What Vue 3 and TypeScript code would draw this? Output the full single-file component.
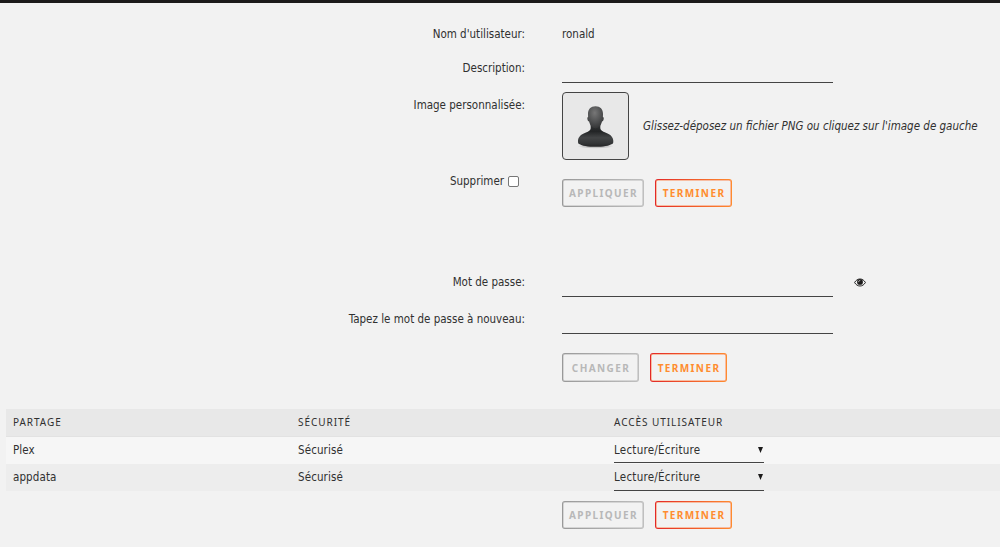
<script setup lang="ts">
import { ref } from 'vue';

interface Share {
  name: string;
  security: string;
  access: string;
}

const username = ref('ronald');
const description = ref('');
const remove = ref(false);
const password = ref('');
const passwordRepeat = ref('');
const showPassword = ref(false);

const shares = ref<Share[]>([
  { name: 'Plex', security: 'Sécurisé', access: 'Lecture/Écriture' },
  { name: 'appdata', security: 'Sécurisé', access: 'Lecture/Écriture' }
]);
</script>

<template>
  <div class="page">
    <form class="form form--user" @submit.prevent>
      <div class="row">
        <label class="row__label">Nom d'utilisateur:</label>
        <span class="row__text">{{ username }}</span>
      </div>
      <div class="row row--description">
        <label class="row__label">Description:</label>
        <input v-model="description" class="input" type="text">
      </div>
      <div class="row row--image">
        <label class="row__label">Image personnalisée:</label>
        <div class="picture">
          <div class="picture__box">
            <svg class="avatar" viewBox="0 0 40 46" width="40" height="46">
              <defs>
                <radialGradient id="head" cx="0.45" cy="0.3" r="0.7">
                  <stop offset="0" stop-color="#777" />
                  <stop offset="0.6" stop-color="#4f5051" />
                  <stop offset="1" stop-color="#343536" />
                </radialGradient>
                <linearGradient id="body" x1="0" y1="0" x2="0" y2="1">
                  <stop offset="0" stop-color="#3a3c3d" />
                  <stop offset="0.35" stop-color="#222425" />
                  <stop offset="0.62" stop-color="#434546" />
                  <stop offset="0.85" stop-color="#353738" />
                  <stop offset="1" stop-color="#242526" />
                </linearGradient>
                <radialGradient id="shade">
                  <stop offset="0.6" stop-color="#c4c4c4" />
                  <stop offset="1" stop-color="#c4c4c4" stop-opacity="0" />
                </radialGradient>
              </defs>
              <ellipse cx="19.500" cy="41.300" rx="18" ry="2.4" fill="url(#shade)" />
              <path fill="url(#body)" d="M14.600 18h9.800l-.1 5.200c.3 2.200 2.400 3.200 5 4.200 4.800 1.700 7.900 4.300 8 8.400 0 1 0 1.900-.3 2.600C33.300 40.900 27 41.700 19.500 41.700S5.700 40.900 2.300 38.400C2 37.700 2 36.800 2 35.800c.1-4.100 3.200-6.700 8-8.400 2.600-1 4.500-2 4.700-4.200z" />
              <path fill="url(#head)" d="M19.500 1.300c4.800 0 7.500 3 7.500 7.700l-.1 2.900c1 .1 1 1.500.7 2.700-.3 1.300-.8 2-1.600 2-.8 3.700-3.200 6.700-6.500 6.700s-5.600-3-6.400-6.700c-.8 0-1.400-.8-1.600-2-.3-1.200-.3-2.600.6-2.700L12 9c0-4.700 2.700-7.700 7.500-7.700z" />
            </svg>
          </div>
          <em class="picture__hint">Glissez-déposez un fichier PNG ou cliquez sur l'image de gauche</em>
        </div>
      </div>
      <div class="row row--actions">
        <label class="row__label row__label--check">
          Supprimer
          <input v-model="remove" class="checkbox" type="checkbox">
        </label>
        <div class="buttons">
          <button class="button button--wide" type="button" disabled>Appliquer</button>
          <button class="button" type="button">Terminer</button>
        </div>
      </div>
    </form>

    <form class="form form--password" @submit.prevent>
      <div class="row row--password">
        <label class="row__label">Mot de passe:</label>
        <input v-model="password" class="input" :type="showPassword ? 'text' : 'password'">
        <svg class="eye" viewBox="0 0 14 10" width="12" height="9" @click="showPassword = !showPassword">
          <path fill="none" stroke="#1c1b1b" stroke-width="1.1" d="M.7 5C2.200 2.400 4.400.9 7 .9S11.800 2.400 13.300 5C11.800 7.600 9.600 9.100 7 9.100S2.200 7.600.7 5z" />
          <circle cx="7" cy="4.3" r="3.4" fill="#1c1b1b" />
          <path fill="none" stroke="#ddd" stroke-width=".8" stroke-linecap="round" d="M5.200 4.200Q5.300 2.600 6.900 2.500" />
        </svg>
      </div>
      <div class="row row--password">
        <label class="row__label">Tapez le mot de passe à nouveau:</label>
        <input v-model="passwordRepeat" class="input" :type="showPassword ? 'text' : 'password'">
      </div>
      <div class="buttons buttons--offset">
        <button class="button button--tall" type="button" disabled>Changer</button>
        <button class="button button--tall" type="button">Terminer</button>
      </div>
    </form>

    <div class="shares">
      <div class="shares__row shares__row--head">
        <span>Partage</span>
        <span>Sécurité</span>
        <span>Accès utilisateur</span>
      </div>
      <div v-for="share in shares" :key="share.name" class="shares__row">
        <span>{{ share.name }}</span>
        <span>{{ share.security }}</span>
        <div class="select">
          <span>{{ share.access }}</span>
          <svg class="select__arrow" viewBox="0 0 5 6" width="5" height="6">
            <path d="M0 0h5L2.500 6z" fill="#1c1b1b" />
          </svg>
        </div>
      </div>
    </div>
    <div class="buttons buttons--offset buttons--shares">
      <button class="button button--wide" type="button" disabled>Appliquer</button>
      <button class="button" type="button">Terminer</button>
    </div>
  </div>
</template>

<style>
body {
  margin: 0;
  background: #f2f2f2;
}
</style>

<style scoped>
.page {
  box-sizing: border-box;
  height: 547px;
  overflow: hidden;
  border-top: 3px solid #1c1b1b;
  background: #f2f2f2;
  color: #303030;
  font-family: "DejaVu Sans", sans-serif;
  font-size: 11.5px;
  font-stretch: 75%;
}

.form--user {
  padding-top: 14px;
}

.form--password {
  margin-top: 58px;
}

.row {
  display: flex;
  align-items: flex-start;
  height: 34px;
  line-height: 34px;
}

.row__label {
  width: 525px;
  margin-right: 37px;
  flex: none;
  text-align: right;
  white-space: nowrap;
}

.row__label--check {
  display: flex;
  align-items: center;
  justify-content: flex-end;
  gap: 4px;
  box-sizing: border-box;
  padding-right: 6px;
}

.row--description {
  height: 37px;
}

.row--image {
  height: 76px;
}

.row--actions {
  height: 43px;
}

.row--password {
  height: 37px;
}

.input {
  box-sizing: border-box;
  width: 271px;
  height: 25px;
  margin-top: 7px;
  padding: 0;
  border: 0;
  border-bottom: 1px solid #444;
  border-radius: 0;
  outline: 0;
  background: transparent;
  font: inherit;
}

.checkbox {
  width: 11px;
  height: 11px;
  margin: 0;
  box-sizing: border-box;
  appearance: none;
  border: 1px solid #777;
  border-radius: 2px;
  background: #fff;
}

.checkbox:checked {
  background: #ff8c2f;
}

.picture {
  display: flex;
  align-items: center;
  gap: 14px;
  margin-top: 4px;
}

.picture__box {
  display: flex;
  justify-content: center;
  box-sizing: border-box;
  width: 67px;
  height: 68px;
  padding-top: 12px;
  border: 1px solid #444;
  border-radius: 4px;
  background: #e8e8e8;
  cursor: pointer;
}

.picture__hint {
  white-space: nowrap;
}

.buttons {
  display: flex;
  gap: 11px;
  margin-top: 15px;
}

.buttons--offset {
  margin: 14px 0 0 562px;
}

.buttons--shares {
  margin-top: 10px;
}

.button {
  box-sizing: border-box;
  width: 77px;
  height: 28px;
  padding: 0 0 0 1px;
  border: 1px solid transparent;
  border-radius: 3px;
  background:
    linear-gradient(#f2f2f2, #f2f2f2) padding-box,
    linear-gradient(90deg, #e22828, #ff8c2f) border-box;
  box-shadow: inset 0 0 0 0.5px rgba(255, 110, 45, 0.8);
  color: #ff8c2f;
  font: bold 10px "Noto Sans", sans-serif;
  letter-spacing: 1.4px;
  text-transform: uppercase;
  white-space: nowrap;
  cursor: pointer;
}

.button--wide {
  width: 82px;
}

.button--tall {
  height: 29px;
}

.button:disabled {
  background:
    linear-gradient(#f2f2f2, #f2f2f2) padding-box,
    linear-gradient(90deg, #999, #bfbfbf) border-box;
  box-shadow: inset 0 0 0 0.5px rgba(170, 170, 170, 0.8);
  color: #b8b8b8;
  cursor: default;
}

.eye {
  margin: 13px 0 0 21px;
  cursor: pointer;
}

.shares {
  margin: 27px 0 0 6px;
}

.shares__row {
  display: grid;
  grid-template-columns: 285px 316px 150px;
  box-sizing: border-box;
  height: 27px;
  padding-left: 7px;
  background: #f6f6f6;
  line-height: 27px;
  letter-spacing: 0.1px;
}

.shares__row:nth-child(odd) {
  background: #ededed;
}

.shares__row--head,
.shares__row--head:nth-child(odd) {
  height: 28px;
  border-bottom: 1px solid #e2e2e2;
  background: #e8e8e8;
  font-family: "Noto Sans", sans-serif;
  font-size: 10px;
  font-stretch: 100%;
  letter-spacing: 0.95px;
  text-transform: uppercase;
}

.select {
  display: flex;
  align-items: center;
  justify-content: space-between;
  box-sizing: border-box;
  height: 26px;
  border-bottom: 1px solid #444;
  line-height: 26px;
  letter-spacing: 0.25px;
}

.shares__row:last-child .select {
  height: 27px;
}

.select__arrow {
  margin-right: 1px;
}
</style>
